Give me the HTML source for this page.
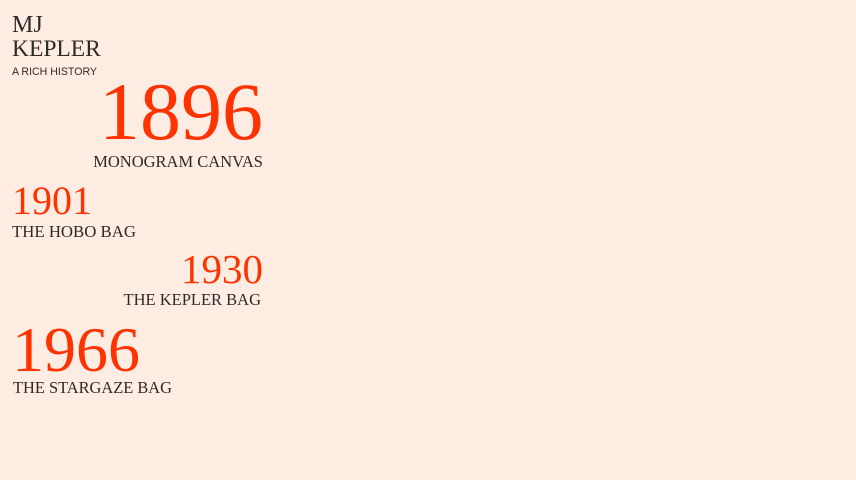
<!DOCTYPE html>
<html><head><meta charset="utf-8"><style>
html,body{margin:0;padding:0;width:856px;height:480px;background:#ffece3;overflow:hidden}
div{position:absolute;line-height:1;white-space:nowrap;font-family:"Liberation Serif",serif}
.r{color:#ff3300}
.d{color:#2e2a28}
</style></head><body>
<div class="d" style="left:12px;top:13px;font-size:24px">MJ</div>
<div class="d" style="left:12px;top:38px;font-size:23.5px">KEPLER</div>
<div class="d" style="left:12px;top:67px;font-size:10.6px;font-family:'Liberation Sans',sans-serif">A RICH HISTORY</div>
<div class="r" style="right:593px;top:71px;font-size:82px">1896</div>
<div class="d" style="right:593px;top:154px;font-size:16.5px">MONOGRAM CANVAS</div>
<div class="r" style="left:12px;top:181px;font-size:40px">1901</div>
<div class="d" style="left:12px;top:224px;font-size:16.8px">THE HOBO BAG</div>
<div class="r" style="right:593px;top:249px;font-size:41px">1930</div>
<div class="d" style="right:595px;top:292px;font-size:16.5px">THE KEPLER BAG</div>
<div class="r" style="left:12px;top:318px;font-size:64px">1966</div>
<div class="d" style="left:13px;top:380px;font-size:16.4px">THE STARGAZE BAG</div>
</body></html>
